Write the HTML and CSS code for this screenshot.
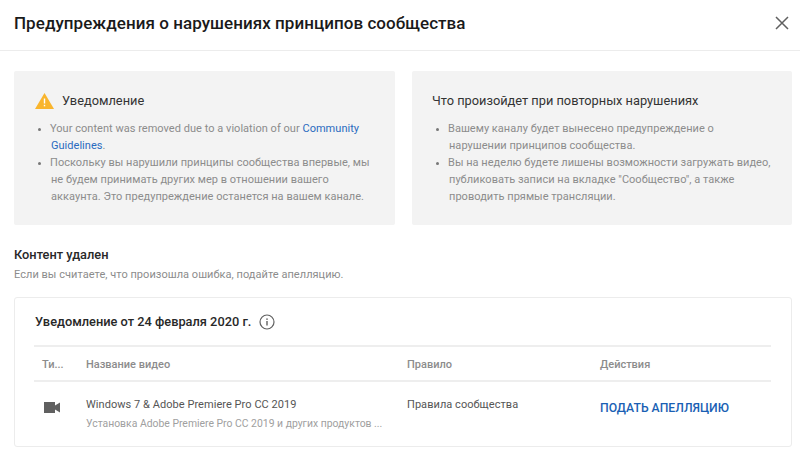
FILE: index.html
```html
<!DOCTYPE html>
<html lang="ru">
<head>
<meta charset="utf-8">
<title>Предупреждения</title>
<link rel="stylesheet" href="styles.css">
</head>
<body>
<header class="header">
  <h1 class="title">Предупреждения о нарушениях принципов сообщества</h1>
  <svg class="close" viewBox="0 0 14 14" width="14" height="14"><path d="M1 1L13 13M13 1L1 13" fill="none" stroke="#606060" stroke-width="1.5"/></svg>
</header>
<main class="content">
  <div class="panels">
    <section class="panel">
      <div class="panel-head">
        <svg class="warn" viewBox="0 0 19 16" width="19" height="16"><path d="M9.5 0L19 16H0Z" fill="#f9b52d"/><rect x="8.8" y="5.5" width="1.4" height="5" fill="#fff"/><rect x="8.8" y="11.8" width="1.4" height="1.5" fill="#fff"/></svg>
        <h2 class="panel-title">Уведомление</h2>
      </div>
      <ul class="list">
        <li>Your content was removed due to a violation of our <a class="link" href="#">Community Guidelines</a>.</li>
        <li>Поскольку вы нарушили принципы сообщества впервые, мы не будем принимать других мер в отношении вашего аккаунта. Это предупреждение останется на вашем канале.</li>
      </ul>
    </section>
    <section class="panel">
      <div class="panel-head">
        <h2 class="panel-title">Что произойдет при повторных нарушениях</h2>
      </div>
      <ul class="list">
        <li>Вашему каналу будет вынесено предупреждение о нарушении принципов сообщества.</li>
        <li>Вы на неделю будете лишены возможности загружать видео, публиковать записи на вкладке "Сообщество", а также проводить прямые трансляции.</li>
      </ul>
    </section>
  </div>
  <h2 class="section-title">Контент удален</h2>
  <p class="section-sub">Если вы считаете, что произошла ошибка, подайте апелляцию.</p>
  <section class="card">
    <div class="card-head">
      <h3 class="card-title">Уведомление от 24 февраля 2020 г.</h3>
      <svg class="info" viewBox="0 0 16 16" width="16" height="16"><circle cx="8" cy="8" r="7" fill="none" stroke="#606060" stroke-width="1.2"/><rect x="7.3" y="7" width="1.4" height="4.5" fill="#606060"/><rect x="7.3" y="4.4" width="1.4" height="1.5" fill="#606060"/></svg>
    </div>
    <div class="row row-head">
      <div>Ти...</div>
      <div>Название видео</div>
      <div>Правило</div>
      <div>Действия</div>
    </div>
    <div class="row row-body">
      <div><svg class="cam" viewBox="0 0 16 11" width="16" height="11"><path d="M0 0H11V3.5L16 .5V10.5L11 7.5V11H0Z" fill="#606060"/></svg></div>
      <div>
        <div class="video-name">Windows 7 &amp; Adobe Premiere Pro CC 2019</div>
        <div class="video-desc">Установка Adobe Premiere Pro CC 2019 и других продуктов ...</div>
      </div>
      <div class="rule">Правила сообщества</div>
      <div><a class="appeal" href="#">ПОДАТЬ АПЕЛЛЯЦИЮ</a></div>
    </div>
  </section>
</main>
</body>
</html>
```
FILE: styles.css
```css
* { box-sizing: border-box; }
html, body { margin: 0; padding: 0; }
body { width: 800px; height: 458px; overflow: hidden; background: #fff; font-family: Roboto, "Noto Sans", sans-serif; color: #282828; }
.header { height: 51px; padding: 0 11px 4px 14px; display: flex; align-items: center; justify-content: space-between; border-bottom: 1px solid #ececec; }
.title { margin: 0; font-size: 17px; font-weight: 500; color: #1a1a1a; letter-spacing: .05px; }
.content { padding: 20px 8px 0 14px; }
.panels { display: grid; grid-template-columns: 381px 380px; gap: 17px; }
.panel { height: 154px; background: #f3f3f3; border-radius: 2px; padding: 21px 20px 0; }
.panel-head { display: flex; align-items: center; gap: 8px; height: 17px; margin-bottom: 11px; }
.warn { margin-top: 1px; margin-left: 1px; }
.panel-title { margin: 0; font-size: 12.8px; font-weight: 400; color: #333; }
.list { margin: 0; padding: 0 0 0 17px; font-size: 11px; line-height: 17px; color: #8c8c8c; letter-spacing: .03px; }
.list li { text-indent: -1px; }
.list li::marker { color: #777; }
.link { color: #2a6bbf; text-decoration: none; }
.section-title { margin: 21px 0 0; font-size: 12.8px; line-height: 18px; font-weight: 500; color: #282828; }
.section-sub { margin: 3px 0 0; font-size: 11px; line-height: 16px; color: #8c8c8c; letter-spacing: .04px; }
.card { margin-top: 14px; height: 150px; border: 1px solid #ececec; border-radius: 3px; padding: 0 20px 0 19px; }
.card-head { height: 49px; display: flex; align-items: center; gap: 8px; padding-left: 1px; border-bottom: 2px solid #eee; }
.card-title { margin: 0; font-size: 12.8px; font-weight: 500; color: #282828; }
.row { display: grid; grid-template-columns: 44px 321px 193px 1fr; padding-left: 8px; }
.row-head { height: 35px; align-items: center; padding-top: 1px; border-bottom: 2px solid #eee; font-size: 11px; font-weight: 500; color: #8c8c8c; }
.row-body { padding-top: 15px; }
.cam { margin-top: 5px; display: block; margin-left: 2px; }
.video-name { font-size: 11px; line-height: 16px; color: #555; letter-spacing: .05px; }
.video-desc { margin-top: 3px; font-size: 10.4px; line-height: 15px; color: #a0a0a0; }
.rule { font-size: 11px; line-height: 16px; color: #555; letter-spacing: .05px; }
.appeal { font-size: 12.2px; line-height: 18px; font-weight: 500; color: #1a5fb4; text-decoration: none; }
```
